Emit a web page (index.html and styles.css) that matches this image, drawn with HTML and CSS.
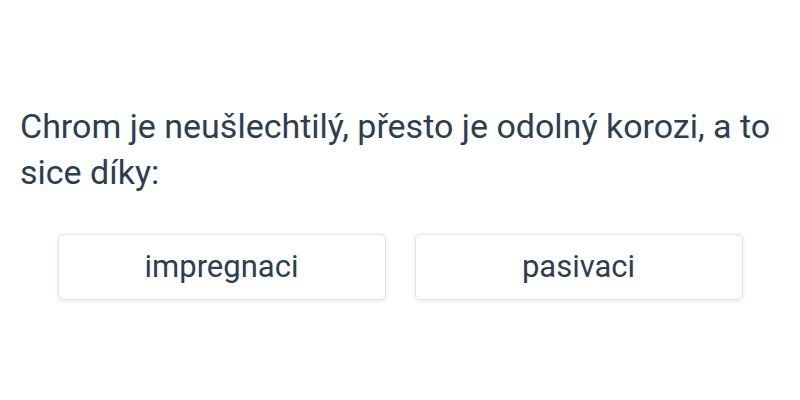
FILE: index.html
```html
<!DOCTYPE html>
<html lang="cs">
<head>
<meta charset="utf-8">
<link rel="stylesheet" href="styles.css">
</head>
<body>
<main class="quiz">
  <p class="question">Chrom je neušlechtilý, přesto je odolný korozi, a to sice díky:</p>
  <div class="answers">
    <button class="answer">impregnaci</button>
    <button class="answer">pasivaci</button>
  </div>
</main>
</body>
</html>
```
FILE: styles.css
```css
html, body {
  margin: 0;
  padding: 0;
  background: #ffffff;
}
.quiz {
  height: 400px;
  box-sizing: border-box;
  display: flex;
  flex-direction: column;
  justify-content: center;
  padding: 2px 20px 0;
  font-family: Roboto, "Noto Sans", sans-serif;
  color: #2c3e50;
}
.question {
  margin: 0;
  font-size: 34px;
  line-height: 46px;
}
.answers {
  display: flex;
  justify-content: center;
  gap: 29px;
  margin-top: 39px;
}
.answer {
  width: 328px;
  height: 66px;
  background: #ffffff;
  border: 1px solid #e4e4e4;
  border-radius: 5px;
  box-shadow: 0 1px 4px rgba(0, 0, 0, 0.1);
  font-family: Roboto, "Noto Sans", sans-serif;
  font-size: 31px;
  color: #2c3e50;
  padding: 0;
}
```
